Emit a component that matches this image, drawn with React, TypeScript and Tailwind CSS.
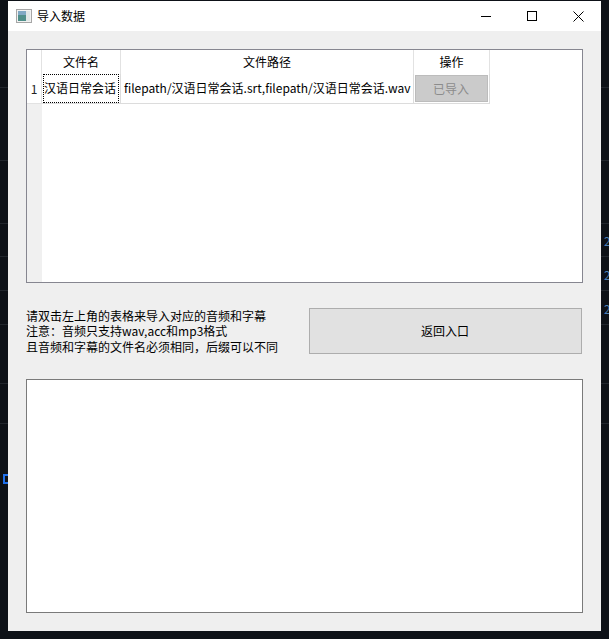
const cjk = "font-['Noto_Sans_CJK_SC','Noto_Sans',sans-serif]";

function WindowIcon() {
  return (
    <svg width="16" height="14" viewBox="0 0 16 14" className="shrink-0">
      <rect x="0.5" y="0.5" width="15" height="13" fill="#f2f2f2" stroke="#a6a6a6" />
      <rect x="2" y="2" width="8" height="10" fill="#4f8f8a" />
      <rect x="2" y="2" width="8" height="4" fill="#7fa8c4" />
      <rect x="10" y="2" width="4" height="10" fill="#dfe6e6" />
    </svg>
  );
}

function TitleBar() {
  return (
    <div className="h-[30px] bg-white flex items-center text-black">
      <div className="ml-2 flex items-center gap-[5px]">
        <WindowIcon />
        <span className="text-[12px] leading-none">导入数据</span>
      </div>
      <div className="ml-auto flex items-center">
        <div className="w-[46px] h-[30px] flex items-center justify-center">
          <div className="w-[10px] h-px bg-black" />
        </div>
        <div className="w-[46px] h-[30px] flex items-center justify-center">
          <div className="w-[10px] h-[10px] border border-black" />
        </div>
        <div className="w-[46px] h-[30px] flex items-center justify-center">
          <svg width="11" height="11" viewBox="0 0 11 11">
            <path d="M0.5 0.5L10.5 10.5M10.5 0.5L0.5 10.5" stroke="#000" strokeWidth="1" fill="none" />
          </svg>
        </div>
      </div>
    </div>
  );
}

function DataTable() {
  return (
    <div className="h-[234px] border border-[#868690] bg-white flex">
      <div className="w-[15px] bg-[#f0f0f0] flex flex-col">
        <div className="h-[24px] bg-white border-r border-[#e2e2e2]" />
        <div className="h-[30px] bg-white border-r border-b border-[#e2e2e2] flex items-center justify-center text-[12px] text-[#222]">
          1
        </div>
      </div>
      <div className="grid grid-cols-[79px_293px_76px] grid-rows-[24px_30px] h-[54px] text-[12px] text-black">
        <div className="border-r border-[#e2e2e2] flex items-center justify-center">文件名</div>
        <div className="border-r border-[#e2e2e2] flex items-center justify-center">文件路径</div>
        <div className="border-r border-[#e2e2e2] flex items-center justify-center">操作</div>
        <div className="border-r border-b border-[#dcdcdc] px-px">
          <div className="h-[29px] border border-dotted border-black flex items-center justify-center whitespace-nowrap">
            <span className="-mt-[2px] -ml-[2px]">汉语日常会话</span>
          </div>
        </div>
        <div className="border-r border-b border-[#dcdcdc] flex items-center pl-[3px] whitespace-nowrap">
          <span className="-mt-[2px]">filepath/汉语日常会话.srt,filepath/汉语日常会话.wav</span>
        </div>
        <div className="border-r border-b border-[#dcdcdc] p-px pb-0">
          <div className="h-[27px] bg-[#cbcbcb] border border-[#bcbcbc] flex items-center justify-center text-[#8c8c8c]">
            <span className="-ml-[1px]">已导入</span>
          </div>
        </div>
      </div>
    </div>
  );
}

export default function App() {
  return (
    <div className={`relative w-[609px] h-[639px] bg-[#0d1117] pt-px px-2 pb-2 overflow-hidden ${cjk}`}>
      {/* editor showing behind the window */}
      <div className="absolute inset-x-0 top-[87px] h-px bg-[#21262d]" />
      <div className="absolute inset-x-0 top-[160px] h-px bg-[#21262d]" />
      <div className="absolute inset-x-0 top-[223px] h-px bg-[#21262d]" />
      <div className="absolute inset-x-0 top-[256px] h-px bg-[#21262d]" />
      <div className="absolute inset-x-0 top-[290px] h-px bg-[#21262d]" />
      <div className="absolute inset-x-0 top-[324px] h-px bg-[#21262d]" />
      <div className="absolute inset-x-0 top-[383px] h-px bg-[#21262d]" />
      <div className="absolute inset-x-0 top-[423px] h-px bg-[#21262d]" />
      <div className="absolute left-[3px] top-[474px] w-[5px] h-[10px] border-2 border-r-0 border-[#1f6feb]" />
      <div className="absolute left-[604px] top-[234px] flex flex-col gap-[20px] text-[12px] leading-[14px] text-[#4a7fb5]">
        <span>2</span>
        <span>2</span>
        <span>2</span>
      </div>

      <div className="relative h-[630px] bg-[#efefef] flex flex-col">
        <TitleBar />
        <div className="flex-1 px-[18px] pt-[18px] flex flex-col">
          <DataTable />
          <div className="mt-[25px] flex items-center justify-between h-[46px]">
            <div className="text-[12px] leading-[15.5px] text-black whitespace-nowrap">
              <p>请双击左上角的表格来导入对应的音频和字幕</p>
              <p>注意：音频只支持wav,acc和mp3格式</p>
              <p>且音频和字幕的文件名必须相同，后缀可以不同</p>
            </div>
            <button className="w-[273px] h-[46px] mr-px bg-[#e1e1e1] border border-[#adadad] text-[12px] text-black">
              <span className="-ml-px">返回入口</span>
            </button>
          </div>
          <div className="mt-[25px] h-[234px] bg-white border border-[#7a7a7a]" />
        </div>
      </div>
    </div>
  );
}
